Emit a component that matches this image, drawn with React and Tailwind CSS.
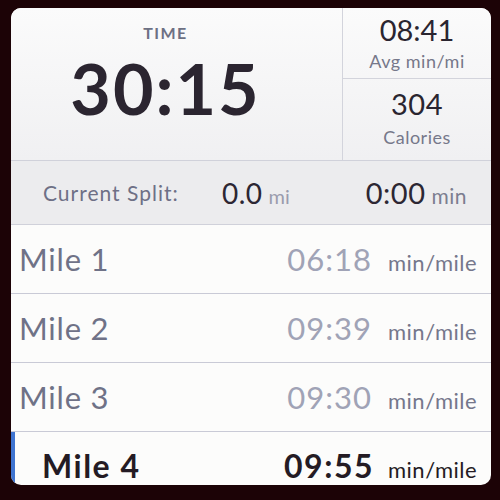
import React from "react";

const miles = [
  { name: "Mile 1", time: "06:18" },
  { name: "Mile 2", time: "09:39" },
  { name: "Mile 3", time: "09:30" },
];

const font = { fontFamily: "Lato, 'Open Sans', sans-serif" };

export default function App() {
  return (
    <div
      className="w-[500px] h-[500px] bg-[#1c0306] pt-[8px] pl-[11px] pr-[9px] pb-[15px]"
      style={font}
    >
      <div className="h-full flex flex-col rounded-[10px] overflow-hidden bg-[#fcfcfb]">
        {/* top stats */}
        <div className="h-[152px] shrink-0 flex bg-gradient-to-b from-[#fbfbfb] to-[#f0f0f2]">
          <div className="w-[331px] flex flex-col items-center pt-[17px] pr-[22px]">
            <div className="text-[16px] font-bold tracking-[1.5px] text-[#6d7083] leading-none">
              TIME
            </div>
            <div className="text-[70px] font-bold text-[#2b2530] leading-none mt-[12px] tracking-[2px]">
              30:15
            </div>
          </div>
          <div className="flex-1 flex flex-col border-l border-[#d3d4dc]">
            <div className="h-[71px] flex flex-col items-center pt-[7px] border-b border-[#d3d4dc]">
              <div className="text-[29px] text-[#2a2530] leading-none">08:41</div>
              <div className="text-[18px] text-[#76788a] leading-none mt-[8px] tracking-[0.5px]">
                Avg min/mi
              </div>
            </div>
            <div className="flex-1 flex flex-col items-center pt-[10px]">
              <div className="text-[29px] text-[#2a2530] leading-none tracking-[0.5px]">304</div>
              <div className="text-[18px] text-[#76788a] leading-none mt-[10px] tracking-[0.5px]">
                Calories
              </div>
            </div>
          </div>
        </div>

        {/* current split */}
        <div className="h-[65px] shrink-0 flex items-center bg-[#ececee] border-y border-[#d0d1da] pl-[32px] pr-[24px]">
          <div className="w-[179px] text-[21px] text-[#6e7086] tracking-[1px]">Current Split:</div>
          <div className="flex items-baseline">
            <span className="text-[28px] text-[#2c2733] tracking-[0.5px]">0.0</span>
            <span className="text-[20px] text-[#9a9cad] ml-[6px]">mi</span>
          </div>
          <div className="ml-auto flex items-baseline">
            <span className="text-[29px] text-[#2c2733] tracking-[0.5px]">0:00</span>
            <span className="text-[21px] text-[#7c7e90] ml-[6px] tracking-[0.5px]">min</span>
          </div>
        </div>

        {/* miles */}
        {miles.map((m) => (
          <div
            key={m.name}
            className="h-[69px] shrink-0 flex items-center border-b border-[#c9cad6] pl-[8px] pr-[13px]"
          >
            <div className="text-[31px] text-[#6f7287] tracking-[0.8px]">{m.name}</div>
            <div className="ml-auto flex items-baseline">
              <span className="text-[31px] text-[#a0a3b6] tracking-[1px]">{m.time}</span>
              <span className="w-[90px] ml-[16px] text-[22px] text-[#75778b] tracking-[0.5px]">
                min/mile
              </span>
            </div>
          </div>
        ))}
        <div className="flex-1 min-h-0 flex items-end border-l-[4px] border-[#3f74d0] pl-[27px] pr-[13px] pb-[3px]">
          <div className="text-[32px] leading-none font-bold text-[#241b24] tracking-[1.5px]">
            Mile 4
          </div>
          <div className="ml-auto flex items-baseline">
            <span className="text-[32px] leading-none font-bold text-[#241b24] tracking-[1.5px]">
              09:55
            </span>
            <span className="w-[90px] ml-[14px] text-[22px] leading-none text-[#241b24] tracking-[0.5px]">
              min/mile
            </span>
          </div>
        </div>
      </div>
    </div>
  );
}
